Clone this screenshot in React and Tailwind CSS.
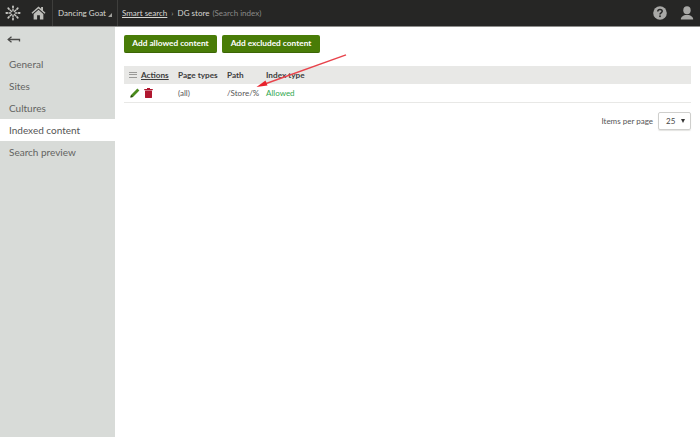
import React from "react";

function Logo() {
  return (
    <svg width="16" height="16" viewBox="0 0 16 16" fill="#c4c4c0">
      {[0, 45, 90, 135, 180, 225, 270, 315].map((a) => (
        <g key={a} transform={`rotate(${a} 8 8)`}>
          <rect x="7.1" y="0.4" width="1.8" height="2.8" rx="0.8" />
          <rect x="7.3" y="3.4" width="1.4" height="3" rx="0.4" />
        </g>
      ))}
    </svg>
  );
}

function Home() {
  return (
    <svg width="15" height="14" viewBox="0 0 16 15" fill="#bdbdb9">
      <path d="M8 0.5 L0.5 7.2 L1.5 8.3 L8 2.6 L14.5 8.3 L15.5 7.2 L12.8 4.8 V1.2 H10.8 V3 Z" />
      <path d="M8 4 L2.8 8.6 V14.5 H6.5 V10 H9.5 V14.5 H13.2 V8.6 Z" />
    </svg>
  );
}

function Arrow() {
  return (
    <svg width="14" height="9" viewBox="0 0 14 9" fill="none" stroke="#4a4a48">
      <path d="M1.5 3.5 H12.5 V5.5" strokeWidth="1.3" />
      <path d="M4.5 0.8 L1.2 3.5 L4.5 6.2" strokeWidth="1.3" />
    </svg>
  );
}

function Help() {
  return (
    <svg width="14" height="14" viewBox="0 0 14 14">
      <circle cx="7" cy="7" r="6.8" fill="#a8a8a6" />
      <path d="M4.8 5.4 C4.8 2.8 9.2 2.8 9.2 5.3 C9.2 6.8 7 6.8 7 8.4" fill="none" stroke="#262626" strokeWidth="1.5" />
      <rect x="6.2" y="9.4" width="1.6" height="1.7" fill="#262626" />
    </svg>
  );
}

function User() {
  return (
    <svg width="14" height="14" viewBox="0 0 14 14" fill="#a8a8a6">
      <ellipse cx="7" cy="4.2" rx="3.7" ry="4" />
      <path d="M0.8 13.6 C0.8 10.6 3.4 9.6 5 9 H9 C10.6 9.6 13.2 10.6 13.2 13.6 Z" />
    </svg>
  );
}

function Pencil() {
  return (
    <svg width="10" height="10" viewBox="0 0 10 10">
      <path d="M7.4 0.6 L9.4 2.6 L3 9 L0.4 9.6 L1 7 Z" fill="#4a8a1c" />
      <path d="M0.4 9.6 L1 7 L3 9 Z" fill="#26400f" />
    </svg>
  );
}

function Trash() {
  return (
    <svg width="9" height="10" viewBox="0 0 9 10" fill="#b0172f">
      <rect x="0.2" y="1" width="8.6" height="1.2" />
      <rect x="3" y="0" width="3" height="1.2" />
      <rect x="1" y="2.6" width="7" height="7.4" rx="0.4" />
    </svg>
  );
}

function Btn({ children, w }) {
  return (
    <button className={`h-[18px] ${w} rounded-[2px] bg-[#497c07] text-white text-[8.3px] font-bold border-b border-[#3b6505] flex items-center justify-center`}>
      {children}
    </button>
  );
}

function Nav({ children, active }) {
  return (
    <div className={`h-[22px] pl-[9px] flex items-center text-[10px] ${active ? "bg-white text-[#555555]" : "text-[#636361]"}`}>
      {children}
    </div>
  );
}

export default function App() {
  return (
    <div className="w-[700px] h-[437px] flex flex-col overflow-hidden bg-white font-['Lato','Noto_Sans',sans-serif]">
      <header className="h-[27px] shrink-0 bg-[#262625] border-b border-[#8e8e8c] flex items-center text-[8px] text-[#d8d8d4]">
        <div className="w-[25px] flex justify-center"><Logo /></div>
        <div className="w-[28px] h-full flex items-center justify-center border-r border-[#3e3e3c]"><Home /></div>
        <div className="w-[65px] h-full flex items-center pl-[5px] border-r border-[#3e3e3c] whitespace-nowrap">
          Dancing Goat
          <span className="ml-[2px] mt-[3px] w-0 h-0 border-l-[4px] border-l-transparent border-b-[4px] border-b-[#a0a09c]" />
        </div>
        <div className="flex items-center pl-[4px] whitespace-nowrap">
          <span className="underline">Smart search</span>
          <span className="mx-[4px] text-[#a0a09c]">›</span>
          <span>DG store</span>
          <span className="ml-[3px] text-[#8a8a88]">(Search index)</span>
        </div>
        <div className="ml-auto flex items-center gap-[13px] pr-[6px]">
          <Help />
          <User />
        </div>
      </header>

      <div className="flex-1 flex min-h-0">
        <aside className="w-[115px] shrink-0 bg-[#d8dbd8]">
          <div className="h-[26px] flex items-center pl-[7px]"><Arrow /></div>
          <Nav>General</Nav>
          <Nav>Sites</Nav>
          <Nav>Cultures</Nav>
          <Nav active>Indexed content</Nav>
          <Nav>Search preview</Nav>
        </aside>

        <main className="relative flex-1 pl-[9px] pr-[9px] pt-[8px]">
          <div className="flex gap-[5px]">
            <Btn w="w-[93px]">Add allowed content</Btn>
            <Btn w="w-[98px]">Add excluded content</Btn>
          </div>

          <div className="mt-[13px] h-[18px] bg-[#e8e8e6] flex items-center text-[8.2px] font-bold text-[#3c3c3c]">
            <div className="w-[54px] flex items-center pl-[5px]">
              <span className="flex flex-col gap-[1.5px] w-[8px] mr-[4px]">
                <i className="block h-[1px] bg-[#9a9a98]" />
                <i className="block h-[1px] bg-[#9a9a98]" />
                <i className="block h-[1px] bg-[#9a9a98]" />
              </span>
              <span className="underline">Actions</span>
            </div>
            <div className="w-[49px]">Page types</div>
            <div className="w-[39px]">Path</div>
            <div>Index type</div>
          </div>

          <div className="h-[19px] border-b border-[#e8e8e6] flex items-center text-[8px] text-[#555]">
            <div className="w-[54px] flex items-center gap-[4px] pl-[6px]">
              <Pencil />
              <Trash />
            </div>
            <div className="w-[49px]">(all)</div>
            <div className="w-[39px]">/Store/%</div>
            <div className="text-[#2fa84f]">Allowed</div>
          </div>

          <div className="mt-[9px] flex items-center justify-end text-[8px] text-[#555]">
            <span className="mr-[5px]">Items per page</span>
            <div className="w-[33px] h-[18px] border border-[#cfcfcd] rounded-[2px] flex items-center justify-between pl-[7px] pr-[5px] text-[#444] shadow-[0_1px_1px_#e4e4e2]">
              <span>25</span>
              <span className="w-0 h-0 border-l-[2.5px] border-r-[2.5px] border-t-[4px] border-l-transparent border-r-transparent border-t-[#333]" />
            </div>
          </div>

          <svg className="absolute left-[135px] top-[27px] pointer-events-none" width="100" height="36" viewBox="0 0 100 36" fill="none">
            <path d="M96 0.8 L12 31" stroke="#e8434b" strokeWidth="1.4" />
            <path d="M6.5 33 L15.5 26.5 L17.5 31.5 Z" fill="#e8212c" />
          </svg>
        </main>
      </div>
    </div>
  );
}
